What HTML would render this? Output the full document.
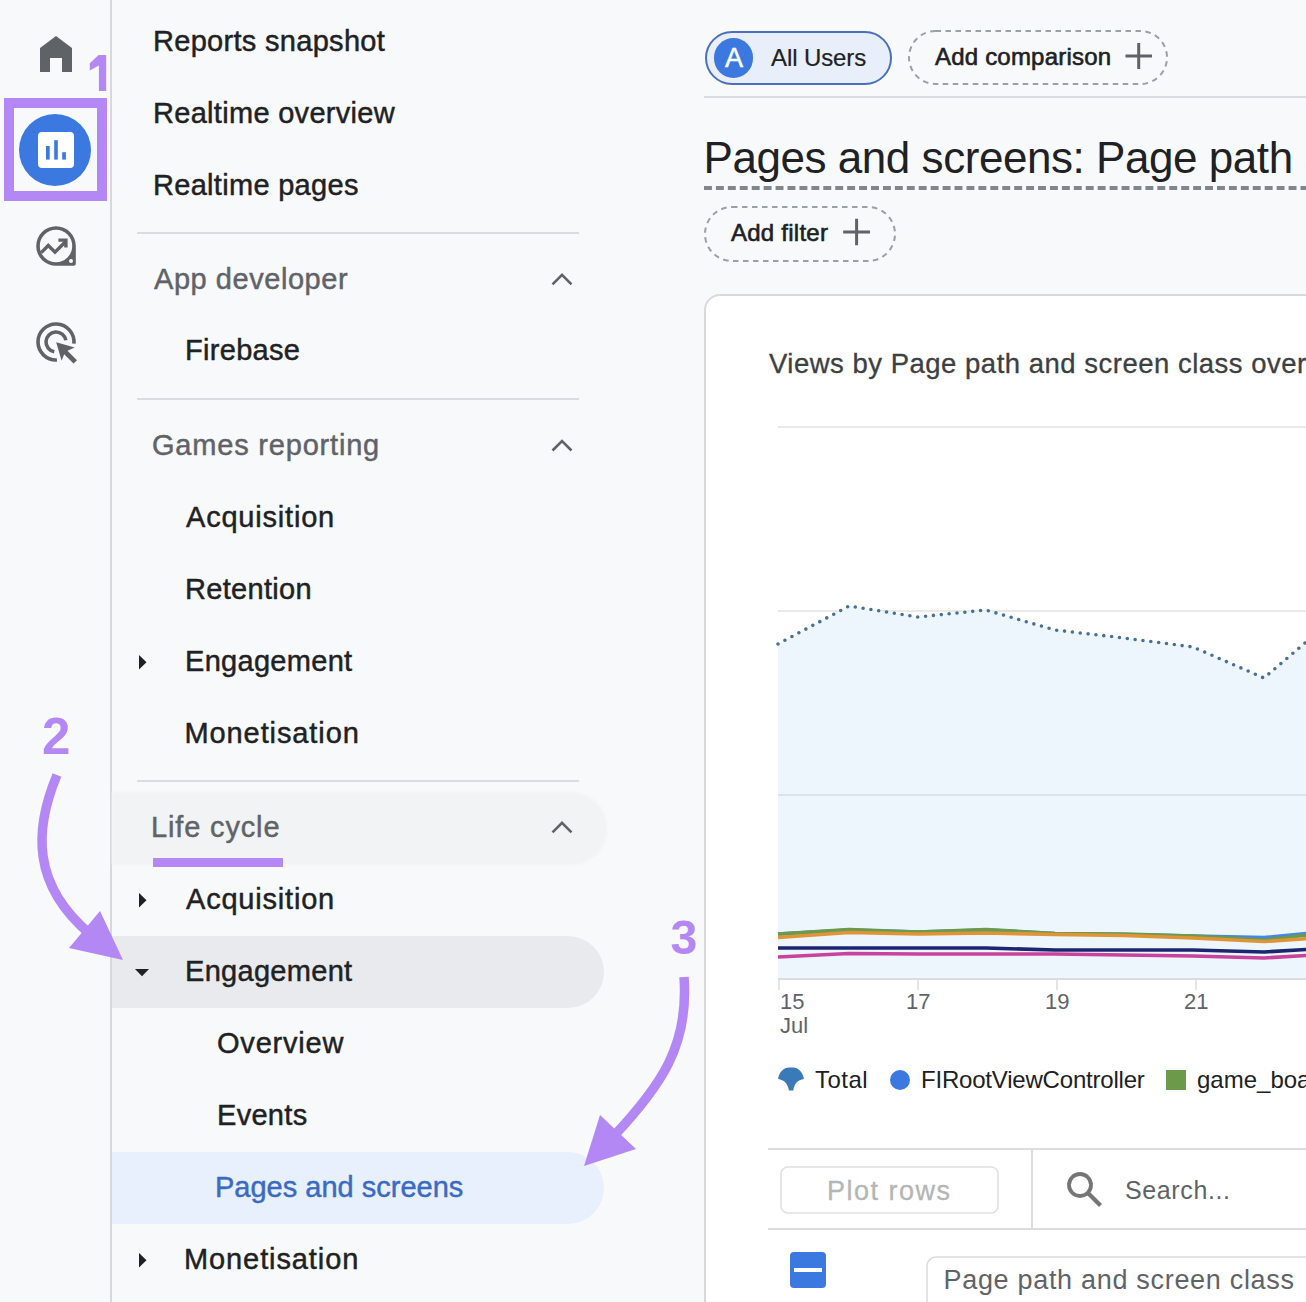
<!DOCTYPE html>
<html><head><meta charset="utf-8">
<style>
html,body{margin:0;padding:0;}
body{width:1306px;height:1302px;overflow:hidden;position:relative;background:#f8f9fb;font-family:"Liberation Sans",sans-serif;color:#202124;}
.t{position:absolute;white-space:nowrap;line-height:1;}
.s{font-size:29px;letter-spacing:0.3px;-webkit-text-stroke:0.45px currentColor;}
.g{color:#5f6368;}
.div{position:absolute;left:137px;width:442px;height:2px;background:#dadce0;}
.pill{position:absolute;left:112px;width:492px;border-radius:0 36px 36px 0;}
svg{position:absolute;left:0;top:0;}
</style></head>
<body>
<!-- rail divider -->
<div style="position:absolute;left:110px;top:0;width:2px;height:1302px;background:#d6d8db"></div>

<!-- pills -->
<div class="pill" style="top:792px;height:73px;width:495px;background:#f2f3f5;filter:blur(1.2px)"></div>
<div class="pill" style="top:936px;height:72px;background:#e8eaed"></div>
<div class="pill" style="top:1152px;height:72px;background:#e8f0fe"></div>

<!-- dividers -->
<div class="div" style="top:232px"></div>
<div class="div" style="top:398px"></div>
<div class="div" style="top:780px"></div>

<!-- sidebar text: top = baseline - 24.5 -->
<div class="t s" style="left:153px;top:26.5px">Reports snapshot</div>
<div class="t s" style="left:153px;top:98.5px">Realtime overview</div>
<div class="t s" style="left:153px;top:171px">Realtime pages</div>
<div class="t s g" style="left:154px;top:265px;letter-spacing:0.55px">App developer</div>
<div class="t s" style="left:185px;top:336px">Firebase</div>
<div class="t s g" style="left:152px;top:431px;letter-spacing:0.8px">Games reporting</div>
<div class="t s" style="left:186px;top:503px;letter-spacing:0.8px">Acquisition</div>
<div class="t s" style="left:185px;top:575px">Retention</div>
<div class="t s" style="left:185px;top:647px">Engagement</div>
<div class="t s" style="left:184.5px;top:719px;letter-spacing:0.9px">Monetisation</div>
<div class="t s g" style="left:151px;top:813px;letter-spacing:0.85px">Life cycle</div>
<div class="t s" style="left:186px;top:885px;letter-spacing:0.8px">Acquisition</div>
<div class="t s" style="left:185px;top:957px">Engagement</div>
<div class="t s" style="left:217px;top:1029px;letter-spacing:0.8px">Overview</div>
<div class="t s" style="left:217px;top:1101px">Events</div>
<div class="t s" style="left:215px;top:1173px;letter-spacing:0px;color:#3b6bc0">Pages and screens</div>
<div class="t s" style="left:184px;top:1245px;letter-spacing:0.9px">Monetisation</div>

<!-- purple underline -->
<div style="position:absolute;left:153px;top:858px;width:130px;height:9px;background:#b388f5"></div>

<!-- ===== right side ===== -->
<!-- All users chip -->
<div style="position:absolute;left:704.5px;top:30.5px;width:183.5px;height:50.5px;border:2px solid #4b70b9;border-radius:27px;background:#e9eefb"></div>
<div style="position:absolute;left:713.8px;top:38.3px;width:39.5px;height:39.5px;border-radius:50%;background:#3b78e0"></div>
<div class="t" style="left:720px;top:45px;font-size:27px;color:#fff;width:28px;text-align:center;-webkit-text-stroke:0.5px #fff">A</div>
<div class="t" style="left:771px;top:46px;font-size:24px;letter-spacing:-0.1px;-webkit-text-stroke:0.2px currentColor">All Users</div>
<div class="t" style="left:935px;top:44.7px;font-size:24px;letter-spacing:0.2px;-webkit-text-stroke:0.6px currentColor">Add comparison</div>
<div style="position:absolute;left:704px;top:96px;width:602px;height:2px;background:#dadce0"></div>

<!-- title -->
<div class="t" style="left:703.5px;top:136px;font-size:44px;letter-spacing:-0.45px">Pages and screens: Page path and screen class</div>
<div class="t" style="left:731px;top:220.7px;font-size:24px;letter-spacing:0.25px;-webkit-text-stroke:0.6px currentColor">Add filter</div>

<!-- card -->
<div style="position:absolute;left:704px;top:294px;width:700px;height:1100px;border:2px solid #d9d9dc;border-radius:16px;background:#fff"></div>
<div class="t" style="left:769px;top:349.5px;font-size:27.5px;letter-spacing:0.5px;color:#3c4043;-webkit-text-stroke:0.3px currentColor">Views by Page path and screen class over time</div>

<svg width="1306" height="1302" viewBox="0 0 1306 1302">
<!-- home -->
<path d="M40,48 L56,36 L72,48 L72,72 L62,72 L62,58 L50,58 L50,72 L40,72 Z" fill="#5f6368"/>
<!-- digit 1 -->
<polygon points="98.6,55 106.2,55 106.2,91 98.9,91 98.9,65.5 89.8,70.4 89.8,63.2" fill="#b388f5"/>
<!-- purple box -->
<rect x="9" y="103" width="93" height="93" fill="none" stroke="#b388f5" stroke-width="10"/>
<!-- reports icon -->
<circle cx="55" cy="150" r="36" fill="#3b78e0"/>
<rect x="38" y="132" width="36" height="36" rx="4" fill="#fff"/>
<rect x="46" y="146" width="3.7" height="13.6" fill="#3b78e0"/>
<rect x="54.2" y="140.2" width="3.6" height="19.4" fill="#3b78e0"/>
<rect x="62.2" y="152.2" width="3.7" height="7.4" fill="#3b78e0"/>
<!-- explore icon -->
<path d="M56,226.2 A19.8,19.8 0 1 0 56,265.8 L73.7,265.8 Q75.8,265.8 75.8,263.7 L75.8,246 A19.8,19.8 0 0 0 56,226.2 Z" fill="#5f6368"/>
<circle cx="56" cy="246" r="16.2" fill="#f8f9fb"/>
<circle cx="71" cy="261" r="2" fill="#f8f9fb"/>
<polyline points="41.2,252.6 48.3,245.5 55,252.2 65.5,241.7" fill="none" stroke="#5f6368" stroke-width="3.4"/>
<polyline points="58.4,240.1 65.9,240.1 65.9,247.6" fill="none" stroke="#5f6368" stroke-width="3.4" stroke-linecap="butt" stroke-linejoin="miter"/>
<!-- advertising icon -->
<path d="M73.93,343.57 A18,18 0 1 0 56.94,359.98" fill="none" stroke="#5f6368" stroke-width="3.6"/>
<path d="M65.85,340.26 A10,10 0 1 0 54.26,351.85" fill="none" stroke="#5f6368" stroke-width="3.6"/>
<polygon points="56.2,342.2 74.7,347.6 67.5,350.8 77,360.2 73.5,363.5 64.2,354.2 61.6,360.8" fill="#5f6368"/>

<!-- chevrons -->
<polyline points="552.5,284.3 562,274.8 571.5,284.3" fill="none" stroke="#5f6368" stroke-width="2.6"/>
<polyline points="552.5,450.5 562,441 571.5,450.5" fill="none" stroke="#5f6368" stroke-width="2.6"/>
<polyline points="552.5,832.3 562,822.8 571.5,832.3" fill="none" stroke="#5f6368" stroke-width="2.6"/>
<!-- triangles -->
<polygon points="139,655 146.5,662.2 139,669.5" fill="#202124"/>
<polygon points="139,893 146.5,900.2 139,907.5" fill="#202124"/>
<polygon points="135,969 149,969 142,976.2" fill="#202124"/>
<polygon points="139,1253 146.5,1260.2 139,1267.5" fill="#202124"/>

<!-- arrows -->
<path d="M57,775 C34,830 32,885 90,934" fill="none" stroke="#b388f5" stroke-width="9.5"/>
<polygon points="100,911 69,948 123,960" fill="#b388f5"/>
<path d="M684,977 C689,1045 662,1085 612,1138" fill="none" stroke="#b388f5" stroke-width="9.5"/>
<polygon points="600,1115 636,1149 584,1166" fill="#b388f5"/>

<!-- dashed chips -->
<rect x="909" y="31" width="258" height="53" rx="26.5" fill="none" stroke="#9aa0a6" stroke-width="2" stroke-dasharray="5.5 4.5"/>
<path d="M1125.5,56 H1152 M1138.7,43 V69" stroke="#5f6368" stroke-width="3"/>
<line x1="704" y1="188" x2="1306" y2="188" stroke="#80868b" stroke-width="4" stroke-dasharray="7.93 4"/>
<rect x="705" y="207" width="190" height="54" rx="27" fill="none" stroke="#9aa0a6" stroke-width="2" stroke-dasharray="5.5 4.5"/>
<path d="M843.2,232 H870 M856.6,218.7 V245.2" stroke="#5f6368" stroke-width="3"/>

<!-- chart -->
<g stroke="#e3e3e3" stroke-width="1.6">
<line x1="778" y1="427" x2="1306" y2="427"/>
<line x1="778" y1="611" x2="1306" y2="611"/>
<line x1="778" y1="795" x2="1306" y2="795"/>
</g>
<path d="M778,644 L849,606 L918,617 L986,610 L1055,630 L1124,638 L1193,647 L1264,678 L1333,619 L1333,979 L778,979 Z" fill="#edf5fd"/>
<line x1="778" y1="795" x2="1306" y2="795" stroke="#d3dbe4" stroke-width="1.6"/>
<polyline points="778,644 849,606 918,617 986,610 1055,630 1124,638 1193,647 1264,678 1333,619" fill="none" stroke="#4a6f94" stroke-width="3.6" stroke-linecap="round" stroke-dasharray="0 7.9"/>
<g fill="none" stroke-width="3.6" stroke-linejoin="round">
<polyline stroke="#4285f4" points="778,934 849,930 918,932 986,930 1055,933.5 1124,934.5 1193,936 1264,937.5 1333,931"/>
<polyline stroke="#6a9a4a" points="778,934 849,929.5 918,932 986,929.5 1055,933.5 1124,934 1193,936 1264,940 1333,932"/>
<polyline stroke="#df9438" points="778,937.5 849,932.5 918,934 986,933 1055,934.5 1124,935.5 1193,938 1264,941.5 1333,937"/>
<polyline stroke="#1c2670" points="778,948 849,948 918,948 986,948 1055,950 1124,950 1193,950 1264,952 1333,948"/>
<polyline stroke="#c8449c" points="778,957 849,953.5 918,954 986,954 1055,954 1124,955 1193,956 1264,958 1333,954"/>
</g>
<line x1="778" y1="979" x2="1306" y2="979" stroke="#dadce0" stroke-width="2"/>
<g stroke="#dadce0" stroke-width="1.5">
<line x1="779" y1="979" x2="779" y2="990"/>
<line x1="918" y1="979" x2="918" y2="990"/>
<line x1="1057" y1="979" x2="1057" y2="990"/>
<line x1="1196" y1="979" x2="1196" y2="990"/>
</g>

<!-- legend -->
<path d="M778.1,1079 C779,1072 784,1067.4 789,1067.4 L793,1067.4 C798,1067.4 803,1072 803.9,1079 C798,1080 794.5,1083 793.3,1090.4 L789,1090.4 C787.5,1083 784,1080 778.1,1079 Z" fill="#3a7ab8"/>
<circle cx="900" cy="1080" r="10" fill="#3b78e0"/>
<rect x="1166" y="1070" width="20" height="20" fill="#6a9a4a"/>

<!-- table -->
<line x1="768" y1="1149" x2="1306" y2="1149" stroke="#dadce0" stroke-width="2"/>
<line x1="768" y1="1229" x2="1306" y2="1229" stroke="#dadce0" stroke-width="2"/>
<line x1="1032" y1="1149" x2="1032" y2="1229" stroke="#dadce0" stroke-width="2"/>
<rect x="781" y="1167" width="217" height="46" rx="7" fill="none" stroke="#e0e0e0" stroke-width="1.6"/>
<circle cx="1080" cy="1185" r="11" fill="none" stroke="#757575" stroke-width="3.8"/>
<line x1="1088" y1="1193" x2="1100.5" y2="1205.5" stroke="#757575" stroke-width="4.3"/>
<rect x="790" y="1252" width="36" height="36" rx="4" fill="#3b78e0"/>
<rect x="794" y="1268" width="28" height="4" fill="#fff"/>
<rect x="927" y="1257" width="420" height="80" rx="9" fill="none" stroke="#dadce0" stroke-width="1.6"/>
</svg>

<!-- purple digits -->

<div class="t" style="left:42px;top:710.5px;font-size:51px;font-weight:700;color:#b388f5">2</div>
<div class="t" style="left:670.5px;top:913.5px;font-size:48px;font-weight:700;color:#b388f5">3</div>

<!-- chart labels -->
<div class="t" style="left:780px;top:990.5px;font-size:22px;color:#5f6368">15</div>
<div class="t" style="left:780px;top:1014.5px;font-size:22px;color:#5f6368">Jul</div>
<div class="t" style="left:906px;top:990.5px;font-size:22px;color:#5f6368">17</div>
<div class="t" style="left:1045px;top:990.5px;font-size:22px;color:#5f6368">19</div>
<div class="t" style="left:1184px;top:990.5px;font-size:22px;color:#5f6368">21</div>

<div class="t" style="left:815px;top:1067.5px;font-size:24px;letter-spacing:0.5px;color:#202124">Total</div>
<div class="t" style="left:921px;top:1067.5px;font-size:24px;letter-spacing:-0.2px;color:#202124">FIRootViewController</div>
<div class="t" style="left:1197px;top:1067.5px;font-size:24px;color:#202124">game_board</div>

<div class="t" style="left:827px;top:1177.5px;font-size:27px;letter-spacing:1.5px;color:#b5b5b5;-webkit-text-stroke:0.3px currentColor">Plot rows</div>
<div class="t" style="left:1125px;top:1177.5px;font-size:25px;letter-spacing:0.62px;color:#5f6368">Search...</div>
<div class="t" style="left:943.5px;top:1266.5px;font-size:27px;letter-spacing:0.69px;color:#5f6368">Page path and screen class</div>

</body></html>
